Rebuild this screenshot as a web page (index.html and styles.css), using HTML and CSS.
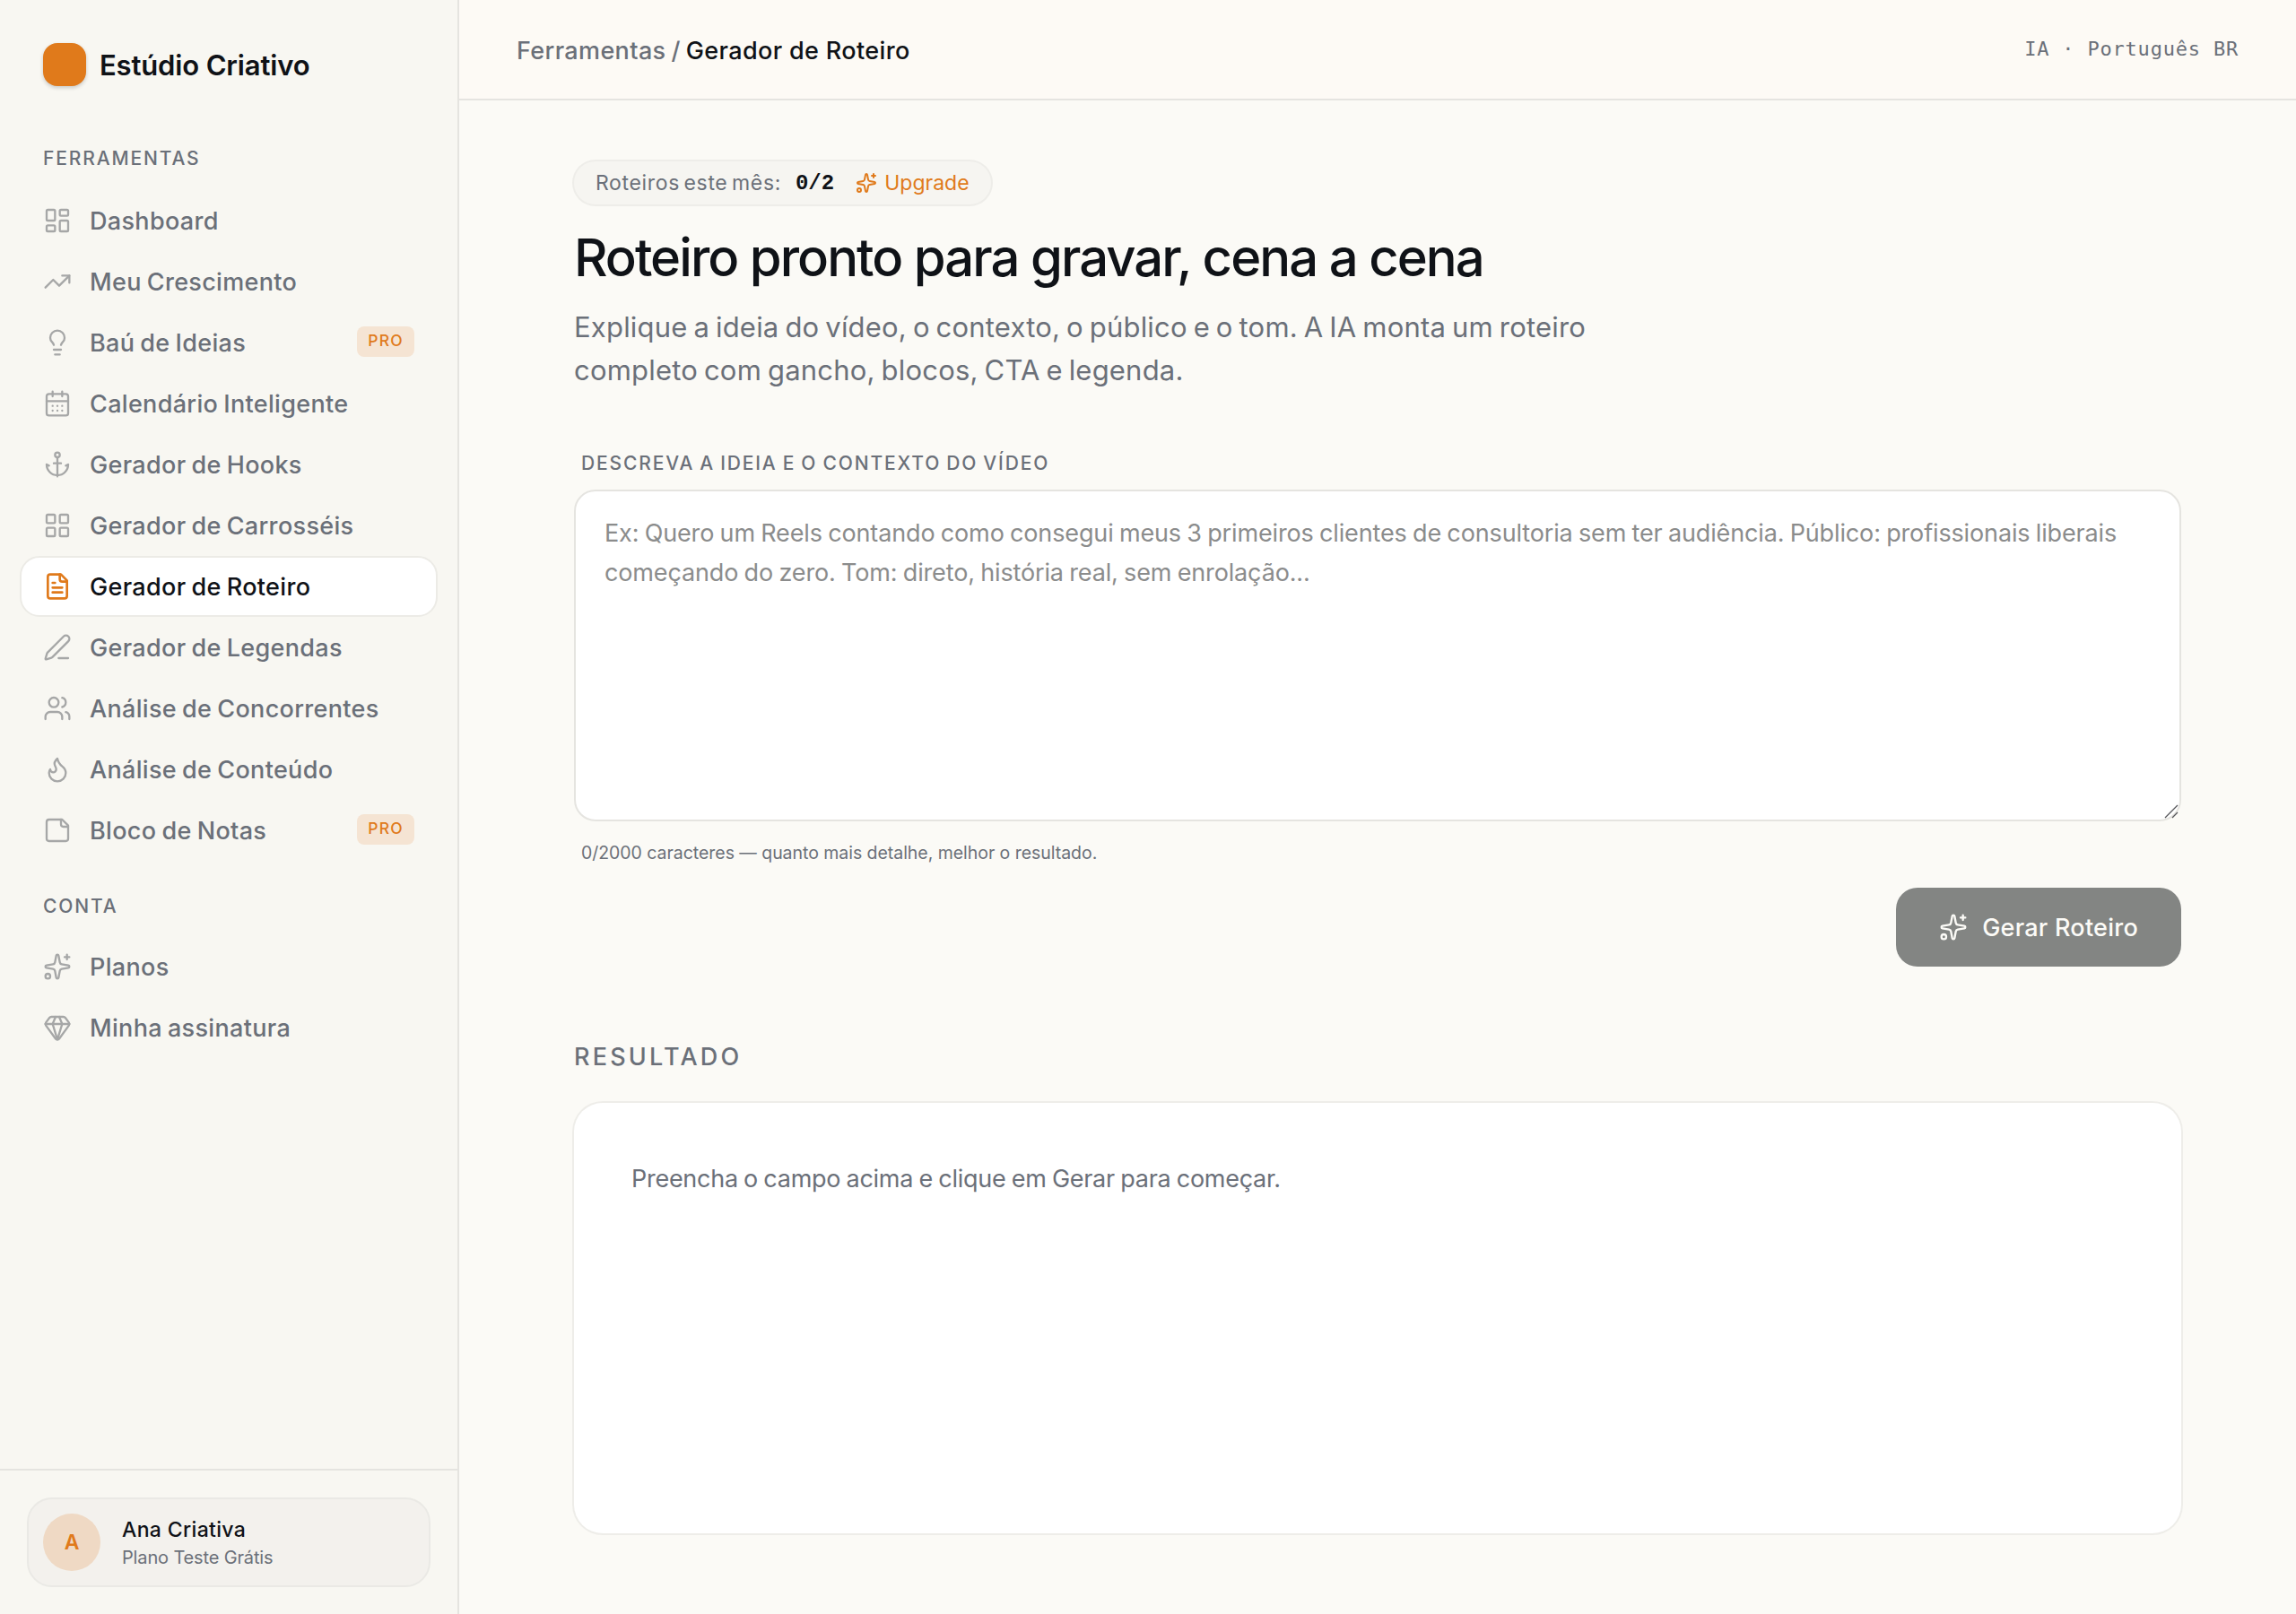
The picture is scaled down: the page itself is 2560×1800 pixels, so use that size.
FILE: index.html
```html
<!DOCTYPE html>
<html lang="pt-BR">
<head>
<meta charset="utf-8">
<title>Gerador de Roteiro</title>
<link rel="stylesheet" href="styles.css">
</head>
<body>
<svg width="0" height="0" class="sprite" aria-hidden="true">
  <symbol id="sparkles" viewBox="0 0 24 24"><path d="M11.017 2.814a1 1 0 0 1 1.966 0l1.051 5.558a2 2 0 0 0 1.594 1.594l5.558 1.051a1 1 0 0 1 0 1.966l-5.558 1.051a2 2 0 0 0-1.594 1.594l-1.051 5.558a1 1 0 0 1-1.966 0l-1.051-5.558a2 2 0 0 0-1.594-1.594l-5.558-1.051a1 1 0 0 1 0-1.966l5.558-1.051a2 2 0 0 0 1.594-1.594z"/><path d="M20 2v4M22 4h-4"/><circle cx="4" cy="20" r="2"/></symbol>
</svg>
<div class="app">
  <aside class="sidebar">
    <div class="brand"><span class="brand-mark"></span><span class="brand-name">Estúdio Criativo</span></div>
    <nav class="nav">
      <div class="nav-label">FERRAMENTAS</div>
      <a class="nav-item"><svg class="icon" viewBox="0 0 24 24"><rect width="7" height="9" x="3" y="3" rx="1"/><rect width="7" height="5" x="14" y="3" rx="1"/><rect width="7" height="9" x="14" y="12" rx="1"/><rect width="7" height="5" x="3" y="16" rx="1"/></svg><span>Dashboard</span></a>
      <a class="nav-item"><svg class="icon" viewBox="0 0 24 24"><path d="M16 7h6v6"/><path d="m22 7-8.5 8.5-5-5L2 17"/></svg><span>Meu Crescimento</span></a>
      <a class="nav-item"><svg class="icon" viewBox="0 0 24 24"><path d="M15 14c.2-1 .7-1.7 1.5-2.5 1-.9 1.5-2.2 1.5-3.5A6 6 0 0 0 6 8c0 1 .2 2.2 1.5 3.5.7.7 1.3 1.5 1.5 2.5"/><path d="M9 18h6M10 22h4"/></svg><span>Baú de Ideias</span><b class="badge">PRO</b></a>
      <a class="nav-item"><svg class="icon" viewBox="0 0 24 24"><path d="M8 2v4M16 2v4"/><rect width="18" height="18" x="3" y="4" rx="2"/><path d="M3 10h18M8 14h.01M12 14h.01M16 14h.01M8 18h.01M12 18h.01M16 18h.01"/></svg><span>Calendário Inteligente</span></a>
      <a class="nav-item"><svg class="icon" viewBox="0 0 24 24"><path d="M12 6v16M19 13l2-1a9 9 0 0 1-18 0l2 1M9 11h6"/><circle cx="12" cy="4" r="2"/></svg><span>Gerador de Hooks</span></a>
      <a class="nav-item"><svg class="icon" viewBox="0 0 24 24"><rect width="7" height="7" x="3" y="3" rx="1"/><rect width="7" height="7" x="14" y="3" rx="1"/><rect width="7" height="7" x="14" y="14" rx="1"/><rect width="7" height="7" x="3" y="14" rx="1"/></svg><span>Gerador de Carrosséis</span></a>
      <a class="nav-item active"><svg class="icon" viewBox="0 0 24 24"><path d="M15 2H6a2 2 0 0 0-2 2v16a2 2 0 0 0 2 2h12a2 2 0 0 0 2-2V7Z"/><path d="M14 2v4a2 2 0 0 0 2 2h4M10 9H8M16 13H8M16 17H8"/></svg><span>Gerador de Roteiro</span></a>
      <a class="nav-item"><svg class="icon" viewBox="0 0 24 24"><path d="M13 21h8"/><path d="M21.174 6.812a1 1 0 0 0-3.986-3.987L3.842 16.174a2 2 0 0 0-.5.83l-1.321 4.352a.5.5 0 0 0 .623.622l4.353-1.32a2 2 0 0 0 .83-.497z"/></svg><span>Gerador de Legendas</span></a>
      <a class="nav-item"><svg class="icon" viewBox="0 0 24 24"><path d="M16 21v-2a4 4 0 0 0-4-4H6a4 4 0 0 0-4 4v2"/><path d="M16 3.128a4 4 0 0 1 0 7.744M22 21v-2a4 4 0 0 0-3-3.87"/><circle cx="9" cy="7" r="4"/></svg><span>Análise de Concorrentes</span></a>
      <a class="nav-item"><svg class="icon" viewBox="0 0 24 24"><path d="M8.5 14.5A2.5 2.5 0 0 0 11 12c0-1.38-.5-2-1-3-1.072-2.143-.224-4.054 2-6 .5 2.5 2 4.9 4 6.5 2 1.6 3 3.5 3 5.5a7 7 0 1 1-14 0c0-1.153.433-2.294 1-3a2.5 2.5 0 0 0 2.5 2.5z"/></svg><span>Análise de Conteúdo</span></a>
      <a class="nav-item"><svg class="icon" viewBox="0 0 24 24"><path d="M16 3H5a2 2 0 0 0-2 2v14a2 2 0 0 0 2 2h14a2 2 0 0 0 2-2V8Z"/><path d="M15 3v4a2 2 0 0 0 2 2h4"/></svg><span>Bloco de Notas</span><b class="badge">PRO</b></a>
      <div class="nav-label second">CONTA</div>
      <a class="nav-item"><svg class="icon"><use href="#sparkles"/></svg><span>Planos</span></a>
      <a class="nav-item"><svg class="icon" viewBox="0 0 24 24"><path d="M10.5 3 8 9l4 13 4-13-2.5-6"/><path d="M17 3a2 2 0 0 1 1.6.8l3 4a2 2 0 0 1 .013 2.382l-7.99 10.986a2 2 0 0 1-3.247 0l-7.99-10.986A2 2 0 0 1 2.4 7.8l2.998-3.997A2 2 0 0 1 7 3z"/><path d="M2 9h20"/></svg><span>Minha assinatura</span></a>
    </nav>
    <div class="account">
      <div class="account-card">
        <div class="avatar">A</div>
        <div class="account-text"><div class="account-name">Ana Criativa</div><div class="account-plan">Plano Teste Grátis</div></div>
      </div>
    </div>
  </aside>
  <div class="page">
    <header class="topbar">
      <div class="crumbs"><span>Ferramentas</span><span>/</span><span class="crumb-current">Gerador de Roteiro</span></div>
      <span class="locale">IA · Português BR</span>
    </header>
    <main class="content">
      <div class="usage"><span class="usage-label">Roteiros este mês:</span><span class="usage-count">0/2</span><a class="upgrade"><svg class="icon"><use href="#sparkles"/></svg><span>Upgrade</span></a></div>
      <h1>Roteiro pronto para gravar, cena a cena</h1>
      <p class="lead">Explique a ideia do vídeo, o contexto, o público e o tom. A IA monta um roteiro<br>completo com gancho, blocos, CTA e legenda.</p>
      <label class="field-label" for="ideia">DESCREVA A IDEIA E O CONTEXTO DO VÍDEO</label>
      <div class="field">
        <textarea id="ideia" placeholder="Ex: Quero um Reels contando como consegui meus 3 primeiros clientes de consultoria sem ter audiência. Público: profissionais liberais começando do zero. Tom: direto, história real, sem enrolação..."></textarea>
        <svg class="grip" viewBox="0 0 16 16"><path d="M1 15 15 1M9 15l6-6"/></svg>
      </div>
      <div class="hint">0/2000 caracteres — quanto mais detalhe, melhor o resultado.</div>
      <div class="actions"><button class="submit" disabled><svg class="icon"><use href="#sparkles"/></svg><span>Gerar Roteiro</span></button></div>
      <h2>RESULTADO</h2>
      <section class="result">Preencha o campo acima e clique em Gerar para começar.</section>
    </main>
  </div>
</div>
</body>
</html>
```
FILE: styles.css
```css
:root {
  --ink: #0f1217;
  --muted: #6b7079;
  --accent: #e07a1b;
  --line: #e5e4e0;
  --sans: Inter, "Liberation Sans", sans-serif;
  --mono: "DejaVu Sans Mono", "Liberation Mono", monospace;
}
* { box-sizing: border-box; }
body { margin: 0; font-family: var(--sans); color: var(--ink); background: #fbfaf6; }
.sprite { display: block; }
.app { display: flex; height: 1800px; }
.icon { width: 32px; height: 32px; flex: none; fill: none; stroke: currentColor; stroke-width: 1.75; stroke-linecap: round; stroke-linejoin: round; }

.sidebar { display: flex; flex-direction: column; flex: none; width: 512px; background: #f8f7f2; border-right: 2px solid var(--line); }
.brand { display: flex; align-items: center; gap: 15px; height: 48px; margin: 48px 48px 64px; }
.brand-mark { width: 48px; height: 48px; border-radius: 16px; background: var(--accent); box-shadow: 0 2px 4px rgba(15, 18, 23, .2); }
.brand-name { padding-top: 2px; font-size: 31px; font-weight: 600; line-height: 48px; letter-spacing: -.15px; }
.nav { display: flex; flex-direction: column; flex: 1; padding: 0 22px; }
.nav-label { height: 32px; margin: 0 0 20px 26px; padding-top: 1px; font-size: 21px; font-weight: 500; line-height: 32px; letter-spacing: 1.85px; color: var(--muted); }
.nav-label.second { margin-top: 34px; margin-bottom: 18px; }
.nav-item { display: flex; align-items: center; gap: 20px; height: 68px; padding: 0 24px; border: 2px solid transparent; border-radius: 22px; font-size: 27px; font-weight: 500; letter-spacing: .33px; word-spacing: -1.5px; color: var(--muted); }
.nav-item .icon { color: #a6a7a7; }
.nav-item.active { background: #fff; border-color: #ecebe6; color: var(--ink); }
.nav-item.active .icon { color: var(--accent); stroke-width: 2; }
.badge { width: 64px; height: 34px; margin: -2px 0 0 auto; border-radius: 8px; background: #f5e4d3; color: var(--accent); font-size: 17.5px; font-weight: 500; line-height: 32px; text-align: center; letter-spacing: 1.2px; }

.account { padding: 30px; border-top: 2px solid var(--line); height: 162px; }
.account-card { display: flex; align-items: center; gap: 24px; height: 100px; padding: 0 16px; border: 2px solid #eae9e5; border-radius: 28px; background: #f3f1ed; }
.avatar { width: 64px; height: 64px; border-radius: 50%; background: #efd9c4; color: var(--accent); font-size: 23px; font-weight: 600; line-height: 64px; text-align: center; }
.account-name { font-size: 23px; font-weight: 500; line-height: 32px; letter-spacing: .35px; }
.account-plan { padding-top: 1px; font-size: 20px; line-height: 28px; letter-spacing: -.15px; color: var(--muted); }

.page { display: flex; flex-direction: column; flex: 1; }
.topbar { display: flex; align-items: center; justify-content: space-between; height: 112px; padding: 0 64px; border-bottom: 2px solid var(--line); background: #fdfaf5; font-size: 27px; }
.crumbs { display: flex; gap: 6px; padding-top: 2px; color: var(--muted); font-weight: 500; letter-spacing: .36px; }
.crumb-current { color: var(--ink); }
.locale { padding-bottom: 2px; font-family: var(--mono); font-size: 22px; letter-spacing: .8px; color: var(--muted); }

.content { display: flex; flex-direction: column; width: 1792px; margin: 0 auto; padding-top: 68px; }
.usage { display: flex; align-items: center; align-self: flex-start; height: 48px; padding: 0 24px; border-radius: 24px; background: #f6f5f1; box-shadow: 0 0 0 2px #eeede9; font-size: 23px; color: var(--muted); }
.usage-label { letter-spacing: .65px; word-spacing: -2.5px; }
.usage-count { margin-left: 16px; font-family: "Liberation Mono", monospace; font-size: 24px; font-weight: 700; color: var(--ink); }
.upgrade { display: flex; align-items: center; gap: 8px; margin-left: 24px; color: var(--accent); }
.upgrade .icon { width: 24px; height: 24px; stroke-width: 2; }
h1 { margin: 26px 0 0; font-size: 58px; font-weight: 500; line-height: 66px; letter-spacing: -1.96px; white-space: nowrap; }
.lead { margin: 21px 0 0; font-size: 31px; line-height: 48px; letter-spacing: .2px; word-spacing: -2px; color: var(--muted); }
.field-label { margin: 64px 0 13px 8px; font-size: 21px; font-weight: 500; line-height: 32px; letter-spacing: 1.85px; word-spacing: -1.3px; color: var(--muted); }
.field { position: relative; height: 370px; }
textarea { display: block; width: 100%; height: 370px; padding: 25px 32px; border: 2px solid var(--line); border-radius: 24px; background: #fff; font: 400 27px/44px var(--sans); letter-spacing: -.14px; word-spacing: -1.1px; resize: none; outline: none; overflow: hidden; }
textarea::placeholder { color: #8b8c8c; }
.grip { position: absolute; right: 3px; bottom: 3px; width: 16px; height: 16px; fill: none; stroke: #55565a; stroke-width: 1.3; }
.hint { margin: 20px 0 0 8px; font-size: 19.5px; line-height: 30px; letter-spacing: -.04px; color: var(--muted); }
.actions { display: flex; justify-content: flex-end; margin-top: 24px; }
.submit { display: flex; align-items: center; gap: 16px; height: 88px; padding: 0 48px; border: 0; border-radius: 24px; background: #838583; color: #fcfbf7; font: 500 27px var(--sans); letter-spacing: .25px; }
h2 { margin: 81px 0 31px; font-size: 27px; font-weight: 500; line-height: 40px; letter-spacing: 3.2px; color: var(--muted); }
.result { height: 480px; padding: 65px 64px; border-radius: 32px; background: #fff; box-shadow: 0 0 0 2px #eeede9; font-size: 27px; line-height: 40px; letter-spacing: -.27px; word-spacing: -1px; color: var(--muted); }
```
